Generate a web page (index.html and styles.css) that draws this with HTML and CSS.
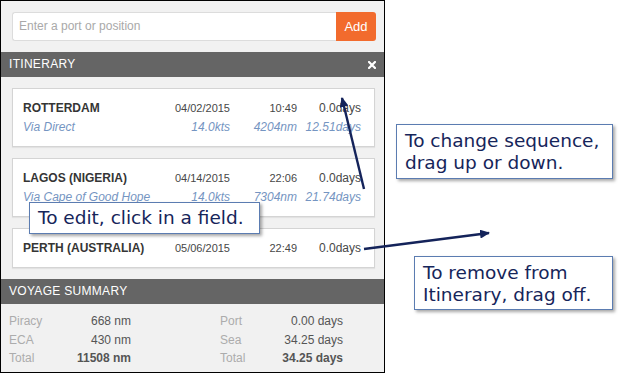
FILE: index.html
```html
<!DOCTYPE html>
<html>
<head>
<meta charset="utf-8">
<link rel="stylesheet" href="styles.css">
</head>
<body>
<div class="stage">
  <div class="panel">
    <div class="search">
      <div class="search-input">Enter a port or position</div>
      <div class="add-btn">Add</div>
    </div>
    <div class="bar"><span>ITINERARY</span><svg class="close" width="8" height="8" viewBox="0 0 8 8"><path d="M1,1 L7,7 M7,1 L1,7" stroke="#fff" stroke-width="2.2" stroke-linecap="square"/></svg></div>
    <div class="cards">
      <div class="card">
        <div class="row main"><span class="name">ROTTERDAM</span><span class="sm">04/02/2015</span><span class="sm">10:49</span><span>0.0days</span></div>
        <div class="row sub"><span>Via Direct</span><span>14.0kts</span><span>4204nm</span><span>12.51days</span></div>
      </div>
      <div class="card">
        <div class="row main"><span class="name">LAGOS (NIGERIA)</span><span class="sm">04/14/2015</span><span class="sm">22:06</span><span>0.0days</span></div>
        <div class="row sub"><span>Via Cape of Good Hope</span><span>14.0kts</span><span>7304nm</span><span>21.74days</span></div>
      </div>
      <div class="card">
        <div class="row main"><span class="name">PERTH (AUSTRALIA)</span><span class="sm">05/06/2015</span><span class="sm">22:49</span><span>0.0days</span></div>
      </div>
    </div>
    <div class="bar"><span>VOYAGE SUMMARY</span></div>
    <div class="summary">
      <div class="sgroup g1">
        <span class="lbl">Piracy</span><span class="val">668 nm</span>
        <span class="lbl">ECA</span><span class="val">430 nm</span>
        <span class="lbl">Total</span><span class="val b">11508 nm</span>
      </div>
      <div class="sgroup g2">
        <span class="lbl">Port</span><span class="val">0.00 days</span>
        <span class="lbl">Sea</span><span class="val">34.25 days</span>
        <span class="lbl">Total</span><span class="val b">34.25 days</span>
      </div>
    </div>
  </div>

  <svg class="arrows" width="623" height="374" viewBox="0 0 623 374">
    <defs>
      <marker id="ah" markerWidth="10" markerHeight="9" refX="9" refY="4.5" orient="auto" markerUnits="userSpaceOnUse">
        <path d="M0,0 L10,4.5 L0,9 Z" fill="#14235a"/>
      </marker>
    </defs>
    <line x1="364" y1="189" x2="342" y2="98" stroke="#14235a" stroke-width="2.4" marker-end="url(#ah)"/>
    <line x1="364" y1="249" x2="489" y2="233" stroke="#14235a" stroke-width="2.4" marker-end="url(#ah)"/>
  </svg>

  <div class="callout c-seq">To change sequence,<br>drag up or down.</div>
  <div class="callout c-edit">To edit, click in a field.</div>
  <div class="callout c-rem">To remove from<br>Itinerary, drag off.</div>
</div>
</body>
</html>
```

FILE: styles.css
```css
html, body {
  margin: 0;
  padding: 0;
  background: #ffffff;
}
.stage {
  position: relative;
  width: 623px;
  height: 374px;
  overflow: hidden;
  font-family: "Liberation Sans", Arial, sans-serif;
}
.panel {
  width: 383px;
  height: 371px;
  border: 1px solid #000;
  background: #f1f1f1;
  display: flex;
  flex-direction: column;
}
.search {
  display: flex;
  margin: 11px 8px 11px 11px;
  height: 29px;
}
.search-input {
  flex: 1;
  background: #fff;
  border: 1px solid #dcdcdc;
  border-right: none;
  border-radius: 3px 0 0 3px;
  color: #a9a9a9;
  font-size: 12px;
  line-height: 27px;
  padding-left: 6px;
}
.add-btn {
  width: 40px;
  background: #f26b2d;
  color: #fff;
  font-size: 13px;
  line-height: 29px;
  text-align: center;
  border-radius: 0 3px 3px 0;
}
.bar {
  height: 25px;
  background: #656565;
  color: #fff;
  font-size: 12px;
  letter-spacing: 0.3px;
  line-height: 25px;
  padding: 0 8px 0 8px;
  display: flex;
  justify-content: space-between;
  align-items: center;
}
.close {
  display: block;
}
.cards {
  display: flex;
  flex-direction: column;
  gap: 11px;
  padding: 11px 9px 11px 11px;
}
.card {
  background: #fff;
  border: 1px solid #d4d4d4;
  box-shadow: 0 1px 1px rgba(0,0,0,0.06);
  padding: 10px 13px 9px 10px;
}
.row {
  display: grid;
  grid-template-columns: minmax(0, 1fr) 80px 67px 64px;
  height: 19px;
  line-height: 19px;
  white-space: nowrap;
  font-size: 12px;
}
.row span { text-align: right; }
.row span:first-child { text-align: left; }
.main { color: #474747; }
.main .name { font-weight: bold; color: #353535; }
.main .sm { font-size: 11px; }
.sub { color: #7595c2; font-style: italic; }
.summary {
  display: flex;
  gap: 89px;
  padding: 8px 0 0 8px;
  font-size: 12px;
  line-height: 18.5px;
}
.sgroup {
  display: grid;
}
.g1 { grid-template-columns: 60px 62px; }
.g2 { grid-template-columns: 56px 67px; }
.lbl { color: #acacac; }
.val { color: #555; text-align: right; }
.val.b { font-weight: bold; }
.arrows {
  position: absolute;
  left: 0;
  top: 0;
  pointer-events: none;
}
.callout {
  position: absolute;
  background: #fff;
  border: 1px solid #5b7cb1;
  box-shadow: 2px 2px 3px rgba(0,0,0,0.35);
  color: #16255a;
  font-family: "DejaVu Sans", Verdana, sans-serif;
  font-size: 18.5px;
  line-height: 22px;
  padding: 5px 8px;
  white-space: nowrap;
  box-sizing: border-box;
}
.c-seq { left: 396px; top: 124px; width: 217px; height: 55px; }
.c-rem { left: 414px; top: 256px; width: 199px; height: 54px; }
.c-edit { left: 29px; top: 202px; width: 231px; height: 32px; padding-top: 4px; }
```
